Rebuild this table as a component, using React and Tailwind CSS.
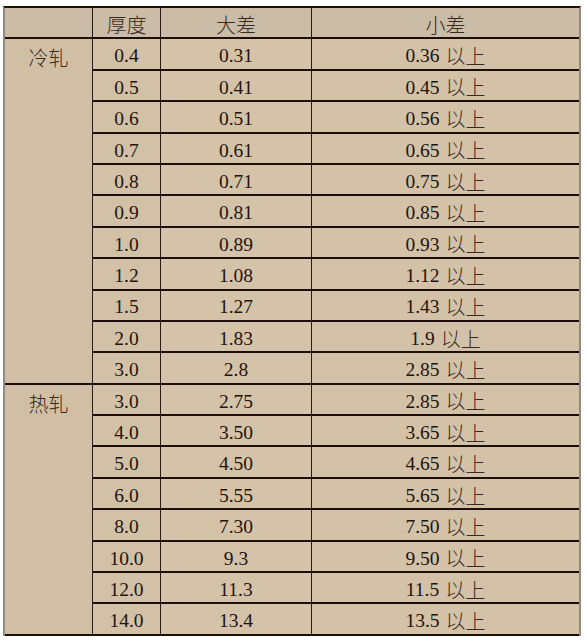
import React from 'react';

const cold = [
    ['0.4', '0.31', '0.36'],
    ['0.5', '0.41', '0.45'],
    ['0.6', '0.51', '0.56'],
    ['0.7', '0.61', '0.65'],
    ['0.8', '0.71', '0.75'],
    ['0.9', '0.81', '0.85'],
    ['1.0', '0.89', '0.93'],
    ['1.2', '1.08', '1.12'],
    ['1.5', '1.27', '1.43'],
    ['2.0', '1.83', '1.9'],
    ['3.0', '2.8', '2.85'],
];

const hot = [
    ['3.0', '2.75', '2.85'],
    ['4.0', '3.50', '3.65'],
    ['5.0', '4.50', '4.65'],
    ['6.0', '5.55', '5.65'],
    ['8.0', '7.30', '7.50'],
    ['10.0', '9.3', '9.50'],
    ['12.0', '11.3', '11.5'],
    ['14.0', '13.4', '13.5'],
];

const cell = 'flex items-center justify-center border-b-2 border-b-[#1c0f0a] border-r border-r-[#2a1c14] pt-[4px]';
const cjk = "font-['Noto_Sans_CJK_SC',sans-serif] font-light text-[20px] text-[#3a2a20]";
const group = `row-span-11 flex justify-center border-b-2 border-b-[#1c0f0a] border-r border-r-[#2a1c14] bg-[#d1bfa5] pt-[9px] ${cjk}`;

function Row({ row }) {
    return (
        <>
            <div className={`${cell} bg-[#d2c0a7]`}>{row[0]}</div>
            <div className={`${cell} bg-[#d4c2a9]`}>{row[1]}</div>
            <div className={`${cell} border-r-0 bg-[#d3c1a8]`}>
                {row[2]}
                <span className={`ml-[6px] ${cjk}`}>以上</span>
            </div>
        </>
    );
}

function App() {
    return (
        <div className="h-[640px] w-[587px] bg-white pt-[6px] pl-[3px]">
            <div className="grid w-[578px] grid-cols-[88px_68px_151px_267px] grid-rows-[repeat(20,31.4px)] border-t-2 border-t-[#1c0f0a] border-l-2 border-l-[#8f8b84] border-r-2 border-r-[#8f8b84] font-['Liberation_Serif',serif] text-[19.5px] leading-none text-[#22140d]">
                {/* header row */}
                <div className={`${cell} bg-[#cbbca7]`}></div>
                <div className={`${cell} bg-[#cbbca7] ${cjk}`}>厚度</div>
                <div className={`${cell} bg-[#cbbca7] ${cjk}`}>大差</div>
                <div className={`${cell} border-r-0 bg-[#cbbca7] ${cjk}`}>小差</div>

                {cold.map((row, i) => (
                    <React.Fragment key={'c' + i}>
                        {i === 0 && <div className={group}>冷轧</div>}
                        <Row row={row} />
                    </React.Fragment>
                ))}

                {hot.map((row, i) => (
                    <React.Fragment key={'h' + i}>
                        {i === 0 && <div className={`${group} row-span-8`}>热轧</div>}
                        <Row row={row} />
                    </React.Fragment>
                ))}
            </div>
        </div>
    );
}

export default App;
